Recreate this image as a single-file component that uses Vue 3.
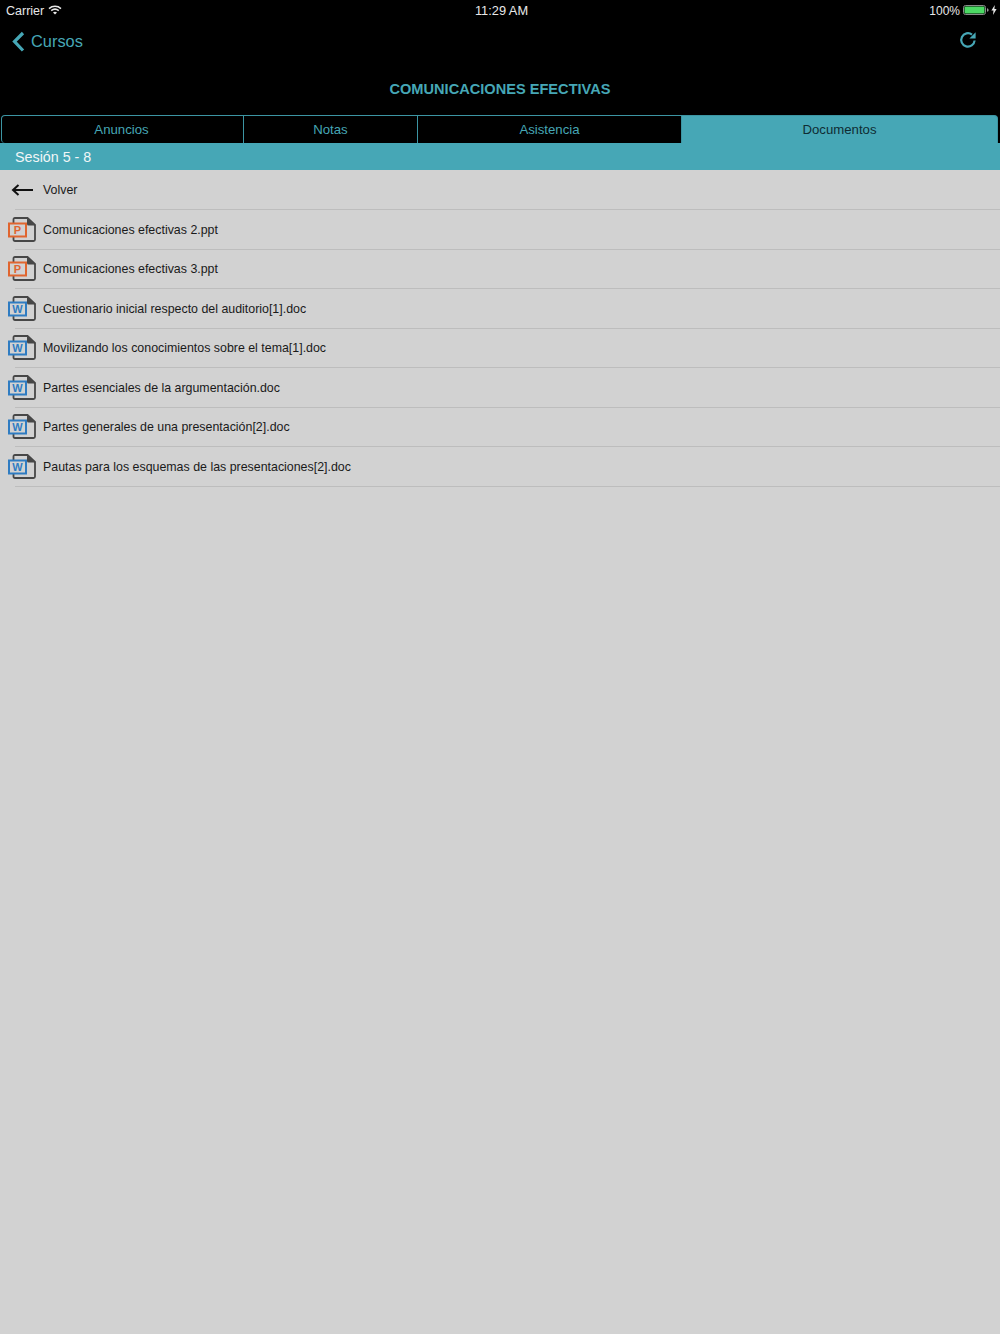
<script setup>
const tabs = [
  { label: 'Anuncios', width: 243 },
  { label: 'Notas', width: 174 },
  { label: 'Asistencia', width: 264 },
  { label: 'Documentos', width: 316, active: true }
]
const docs = [
  { name: 'Comunicaciones efectivas 2.ppt', type: 'p' },
  { name: 'Comunicaciones efectivas 3.ppt', type: 'p' },
  { name: 'Cuestionario inicial respecto del auditorio[1].doc', type: 'w' },
  { name: 'Movilizando los conocimientos sobre el tema[1].doc', type: 'w' },
  { name: 'Partes esenciales de la argumentación.doc', type: 'w' },
  { name: 'Partes generales de una presentación[2].doc', type: 'w' },
  { name: 'Pautas para los esquemas de las presentaciones[2].doc', type: 'w' }
]
</script>

<template>
  <div class="page">
    <header class="top">
      <div class="status">
        <div class="status-left">
          <span>Carrier</span>
          <svg class="wifi" width="14" height="10" viewBox="0 0 14 10">
            <path d="M1 3.600C4.400.6 9.600.6 13 3.600" fill="none" stroke="#e8e8e8" stroke-width="1.500" />
            <path d="M3.200 5.700C5.400 3.900 8.600 3.900 10.800 5.700" fill="none" stroke="#e8e8e8" stroke-width="1.500" />
            <path d="M5 7.400 7 9.600 9 7.400C7.800 6.500 6.200 6.500 5 7.400Z" fill="#e8e8e8" />
          </svg>
        </div>
        <span class="clock">11:29 AM</span>
        <div class="status-right">
          <span>100%</span>
          <svg width="26" height="10" viewBox="0 0 26 10">
            <rect x="0.500" y="0.500" width="22" height="9" rx="2" fill="none" stroke="#8a8a8a" />
            <rect x="1.500" y="1.500" width="20" height="7" rx="1" fill="#4cd964" />
            <path d="M24 3.200c1 .2 1.600.9 1.600 1.800s-.6 1.600-1.600 1.800Z" fill="#9a9a9a" />
          </svg>
          <svg class="bolt" width="6" height="10" viewBox="0 0 6 10">
            <path d="M3.800 0 .4 5.600h2.100L2 10l3.600-6H3.400Z" fill="#e8e8e8" />
          </svg>
        </div>
      </div>
      <nav class="nav">
        <div class="back">
          <svg width="14" height="22" viewBox="0 0 14 22">
            <path d="M12 2 3.500 10.500 12 19.500" fill="none" stroke="#46a7b6" stroke-width="3.200" />
          </svg>
          <span>Cursos</span>
        </div>
        <svg class="refresh" width="18" height="18" viewBox="0 0 18 18">
          <path d="M15.600 9.500A6.700 6.700 0 1 1 13 3.600" fill="none" stroke="#46a7b6" stroke-width="2.200" />
          <path d="M16.600 1.200V7.400H10.400Z" fill="#46a7b6" />
        </svg>
      </nav>
      <h1 class="title">COMUNICACIONES EFECTIVAS</h1>
      <div class="tabs">
        <div
          v-for="tab in tabs"
          :key="tab.label"
          class="tab"
          :class="{ active: tab.active }"
          :style="{ width: tab.width + 'px' }"
        >{{ tab.label }}</div>
      </div>
    </header>

    <div class="session">Sesión 5 - 8</div>

    <ul class="list">
      <li class="row">
        <span class="icon-cell">
          <svg width="22" height="12" viewBox="0 0 22 12">
            <path d="M22 6H2M7.500 1 2 6l5.500 5" fill="none" stroke="#111" stroke-width="2" />
          </svg>
        </span>
        <span class="label">Volver</span>
      </li>
      <li v-for="doc in docs" :key="doc.name" class="row doc-row">
        <span class="icon-cell file-cell">
          <svg width="28" height="25" viewBox="0 0 28 25">
            <path d="M5.500 6V2.500Q5.500 1 7 1H19.500L27 8V22.500Q27 24 25.500 24H7Q5.500 24 5.500 22.500V19" fill="none" stroke="#474747" stroke-width="1.800" />
            <path d="M19 1 27 8.500H20.500Q19 8.500 19 7Z" fill="#474747" />
            <rect
              x="1"
              y="6.500"
              width="17"
              height="13"
              fill="#d2d2d2"
              :stroke="doc.type === 'p' ? '#e0652f' : '#2f7cc2'"
              stroke-width="2"
            />
            <text
              class="glyph"
              x="9.500"
              y="16.800"
              text-anchor="middle"
              :fill="doc.type === 'p' ? '#e0652f' : '#2f7cc2'"
            >{{ doc.type === 'p' ? 'P' : 'W' }}</text>
          </svg>
        </span>
        <span class="label">{{ doc.name }}</span>
      </li>
    </ul>
  </div>
</template>

<style>
html, body { margin: 0; background: #d2d2d2; }
</style>

<style scoped>
.page {
  width: 1000px;
  height: 1334px;
  display: flex;
  flex-direction: column;
  overflow: hidden;
  background: #d2d2d2;
  font-family: "Liberation Sans", Arial, sans-serif;
  color: #1a1a1a;
}
.top { background: #000; }
.status {
  height: 20px;
  box-sizing: border-box;
  padding: 1px 3px 0 6px;
  display: grid;
  grid-template-columns: 1fr auto 1fr;
  align-items: center;
  color: #e8e8e8;
  font-size: 12.500px;
}
.status-left { display: flex; align-items: center; gap: 4px; }
.wifi { margin-top: -2px; }
.clock { font-size: 12.800px; }
.status-right { display: flex; align-items: center; justify-content: flex-end; gap: 3px; font-size: 12px; }
.status-right svg { margin-top: -1px; }
.bolt { margin-left: -1px; }
.nav {
  height: 43px;
  padding: 0 23px 0 11px;
  display: flex;
  align-items: center;
  justify-content: space-between;
}
.back {
  display: flex;
  align-items: center;
  gap: 6px;
  color: #46a7b6;
  font-size: 16.400px;
}
.refresh { margin-top: -3px; }
.title {
  margin: 0;
  height: 52px;
  box-sizing: border-box;
  padding-top: 16px;
  line-height: 20px;
  text-align: center;
  font-size: 14.600px;
  font-weight: 700;
  color: #46a7b6;
}
.tabs {
  display: flex;
  height: 28px;
  margin: 0 2px 0 1px;
}
.tab {
  box-sizing: border-box;
  display: flex;
  align-items: center;
  justify-content: center;
  border: 1px solid #3c95a3;
  border-bottom: 0;
  border-left: 0;
  color: #46a7b6;
  font-size: 13.200px;
}
.tab:first-child {
  border-left: 1px solid #3c95a3;
  border-top-left-radius: 4px;
  border-bottom-left-radius: 4px;
  padding-right: 2px;
}
.tab.active {
  background: #46a7b6;
  color: #0f2c33;
  border-top-right-radius: 4px;
}
.session {
  height: 27px;
  padding-left: 15px;
  background: #46a7b6;
  color: #f2f6f7;
  font-size: 14.300px;
  line-height: 28px;
}
.list { margin: 0; padding: 0.500px 0 0; list-style: none; }
.row {
  height: 39.500px;
  box-sizing: border-box;
  margin-left: 15px;
  display: flex;
  align-items: center;
  font-size: 12.400px;
  border-bottom: 1px solid #bdbdbd;
}
.doc-row .label { padding-top: 1px; }
.icon-cell {
  width: 43px;
  margin-left: -15px;
  flex: none;
  display: flex;
  justify-content: center;
}
.file-cell { justify-content: flex-start; padding-left: 8px; box-sizing: border-box; }
.label { color: #1a1a1a; }
.glyph { font-size: 11px; font-weight: 700; font-family: "Liberation Sans", Arial, sans-serif; }
</style>
